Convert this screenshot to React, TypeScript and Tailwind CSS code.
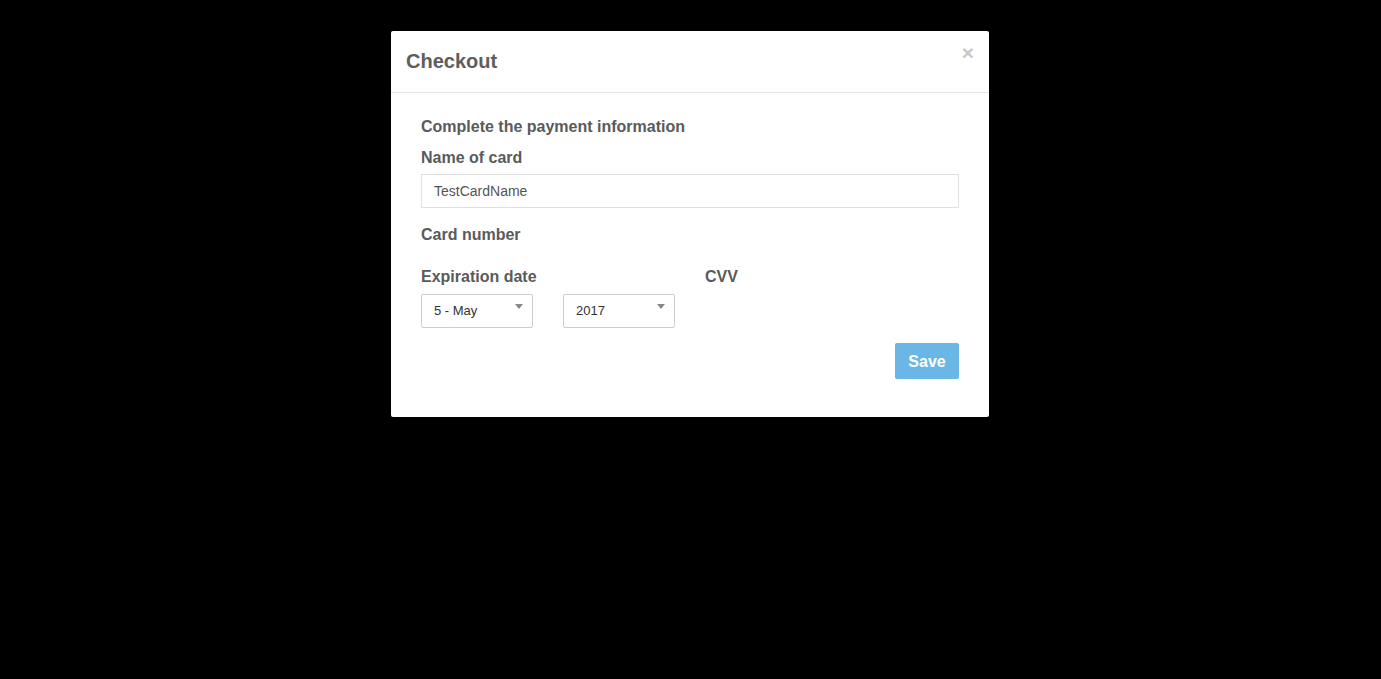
import React from "react";

export default function App() {
  return (
    <div
      className="w-[1381px] h-[679px] bg-black flex justify-center pt-[31px]"
      style={{ fontFamily: '"Liberation Sans", Arial, sans-serif' }}
    >
      <div className="w-[598px] h-[386px] mr-[1px] bg-white rounded-[2px] relative">
        <div className="h-[62px] border-b border-[#e5e5e5] flex items-center px-[15px] pb-[1px]">
          <h4 className="text-[20px] font-bold text-[#5e5e5e] leading-[24px]">Checkout</h4>
          <button className="absolute right-[15px] top-[11px] text-[21px] font-bold leading-[21px] text-[#c8c8c8]">
            ×
          </button>
        </div>
        <div className="pt-[24px] px-[30px] text-[#5a5a5a]">
          <div className="text-[16px] font-bold leading-[20px]">Complete the payment information</div>
          <div className="text-[16px] font-bold leading-[20px] mt-[11px]">Name of card</div>
          <div className="mt-[6px] h-[34px] border border-[#e0e0e0] flex items-center px-[12px] text-[14px] text-[#555]">
            TestCardName
          </div>
          <div className="text-[16px] font-bold leading-[20px] mt-[17px]">Card number</div>
          <div className="flex mt-[22px]">
            <div className="w-[284px] text-[16px] font-bold leading-[20px]">Expiration date</div>
            <div className="text-[16px] font-bold leading-[20px]">CVV</div>
          </div>
          <div className="flex gap-[30px] mt-[7px]">
            {["5 - May", "2017"].map((v) => (
              <div
                key={v}
                className="w-[112px] h-[34px] border border-[#c9ced3] rounded-[2px] flex items-center px-[12px] text-[13px] text-[#333] relative"
              >
                {v}
                <span className="absolute right-[9px] top-[9px] w-0 h-0 border-l-[4px] border-r-[4px] border-t-[5px] border-l-transparent border-r-transparent border-t-[#888]" />
              </div>
            ))}
          </div>
          <div className="flex justify-end mt-[15px]">
            <button className="w-[64px] h-[36px] bg-[#6ab6e6] rounded-[2px] text-white text-[16px] font-bold pt-[1px]">
              Save
            </button>
          </div>
        </div>
      </div>
    </div>
  );
}
